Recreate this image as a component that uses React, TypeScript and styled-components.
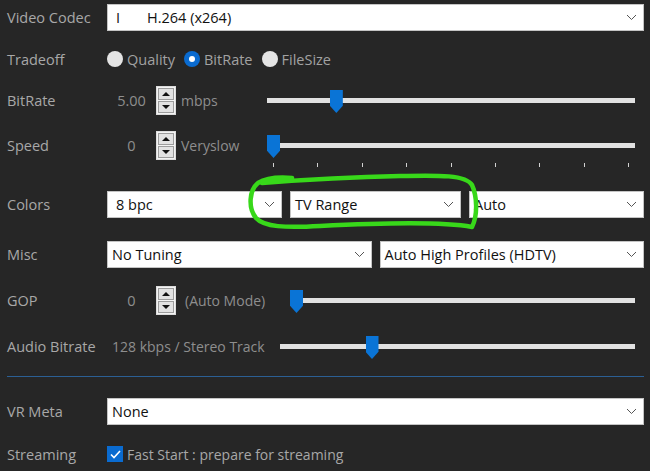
import styled, { createGlobalStyle } from "styled-components";

const GlobalStyle = createGlobalStyle`
  html, body {
    margin: 0;
    padding: 0;
    background: #262626;
  }
  body {
    font-family: "Open Sans", "Noto Sans", sans-serif;
    font-size: 14.5px;
  }
  #root {
    width: 650px;
    height: 471px;
    position: relative;
    overflow: hidden;
  }
`;

const Page = styled.div`
  display: flex;
  flex-direction: column;
  width: 650px;
  box-sizing: border-box;
  padding: 0 6px 0 7px;
`;

const Row = styled.div<{ $mt: number }>`
  display: grid;
  grid-template-columns: 100px 1fr;
  align-items: center;
  height: 30px;
  margin-top: ${(p) => p.$mt}px;
`;

const Label = styled.span`
  color: #a8a8a8;
  white-space: nowrap;
`;

const SelectBox = styled.div`
  height: 27px;
  box-sizing: border-box;
  display: flex;
  align-items: center;
  justify-content: space-between;
  background: #ffffff;
  border: 1px solid #c4c4c4;
  color: #111;
  white-space: nowrap;
  overflow: hidden;
`;

const SelectText = styled.span<{ $pl: number }>`
  padding-left: ${(p) => p.$pl}px;
  display: flex;
  align-items: center;
`;

const CodecTag = styled.span`
  width: 31px;
`;

const Chevron = styled.svg`
  flex: none;
  margin-right: 6px;
`;

const SelectGrid = styled.div<{ $cols: string }>`
  display: grid;
  grid-template-columns: ${(p) => p.$cols};
  gap: 8px;
`;

const RadioGroup = styled.div`
  display: flex;
  align-items: center;
  gap: 9px;
`;

const RadioItem = styled.label`
  display: flex;
  align-items: center;
  gap: 4px;
  color: #a2a2a2;
`;

const RadioDot = styled.span<{ $on?: boolean }>`
  width: 16px;
  height: 16px;
  border-radius: 50%;
  background: ${(p) => (p.$on ? "#0a6bd0" : "#e4e4e4")};
  display: grid;
  place-items: center;
  &::after {
    content: "";
    width: 6px;
    height: 6px;
    border-radius: 50%;
    background: #fff;
    display: ${(p) => (p.$on ? "block" : "none")};
  }
`;

const Controls = styled.div`
  display: flex;
  align-items: center;
  height: 100%;
`;

const NumField = styled.span`
  width: 49px;
  text-align: center;
  color: #8e8e8e;
`;

const Spinner = styled.div`
  width: 20px;
  height: 29px;
  box-sizing: border-box;
  border: 1px solid #dcdcdc;
  background: #f3f3f3;
  padding: 1px;
  display: flex;
  flex-direction: column;
  gap: 1px;
`;

const SpinBtn = styled.div<{ $down?: boolean }>`
  flex: 1;
  background: #e2e2e2;
  border: 1px solid #9c9c9c;
  display: grid;
  place-items: center;
  &::before {
    content: "";
    border-left: 4px solid transparent;
    border-right: 4px solid transparent;
    ${(p) =>
      p.$down ? "border-top: 4px solid #111;" : "border-bottom: 4px solid #111;"}
  }
`;

const Unit = styled.span<{ $ml: number; $w: number }>`
  margin-left: ${(p) => p.$ml}px;
  width: ${(p) => p.$w}px;
  color: #8e8e8e;
  font-size: 14px;
  white-space: nowrap;
`;

const Slider = styled.div`
  flex: 1;
  position: relative;
  height: 30px;
  margin-right: 9px;
  display: flex;
  align-items: center;
`;

const Track = styled.div`
  width: 100%;
  height: 5px;
  background: #e1e1e1;
`;

const Thumb = styled.div`
  position: absolute;
  top: 5px;
  width: 13px;
  height: 23px;
  background: #0a74d6;
  clip-path: polygon(0 0, 100% 0, 100% 68%, 50% 100%, 0 68%);
`;

const Ticks = styled.div`
  position: absolute;
  left: 6px;
  right: 6px;
  top: 33px;
  display: flex;
  justify-content: space-between;
`;

const Tick = styled.span`
  width: 1px;
  height: 4px;
  background: #d2d2d2;
`;

const Separator = styled.div`
  height: 1px;
  margin: 15px 0 0 0;
  background: #2b5f94;
`;

const CheckRow = styled.label`
  display: flex;
  align-items: center;
  gap: 4px;
  color: #a8a8a8;
  font-size: 14px;
`;

const CheckBox = styled.span`
  width: 16px;
  height: 16px;
  background: #0a6bd0;
  display: grid;
  place-items: center;
`;

const Annotation = styled.svg`
  position: absolute;
  left: 0;
  top: 0;
  pointer-events: none;
`;

function Select({ children, pl = 4 }: { children: React.ReactNode; pl?: number }) {
  return (
    <SelectBox>
      <SelectText $pl={pl}>{children}</SelectText>
      <Chevron width="11" height="7" viewBox="0 0 11 7">
        <polyline points="1,1 5.5,5.5 10,1" fill="none" stroke="#555" strokeWidth="1" />
      </Chevron>
    </SelectBox>
  );
}

function Spin() {
  return (
    <Spinner>
      <SpinBtn />
      <SpinBtn $down />
    </Spinner>
  );
}

function RangeSlider({ value, ticks }: { value: number; ticks?: number }) {
  return (
    <Slider>
      <Track />
      <Thumb style={{ left: `calc((100% - 13px) * ${value})` }} />
      {ticks ? (
        <Ticks>
          {Array.from({ length: ticks }).map((_, i) => (
            <Tick key={i} />
          ))}
        </Ticks>
      ) : null}
    </Slider>
  );
}

export default function App() {
  return (
    <>
      <GlobalStyle />
      <Page>
        <Row $mt={2}>
          <Label>Video Codec</Label>
          <Select pl={8}>
            <CodecTag>I</CodecTag>H.264 (x264)
          </Select>
        </Row>
        <Row $mt={12}>
          <Label>Tradeoff</Label>
          <RadioGroup>
            <RadioItem>
              <RadioDot />
              Quality
            </RadioItem>
            <RadioItem>
              <RadioDot $on />
              BitRate
            </RadioItem>
            <RadioItem>
              <RadioDot />
              FileSize
            </RadioItem>
          </RadioGroup>
        </Row>
        <Row $mt={11}>
          <Label>BitRate</Label>
          <Controls>
            <NumField>5.00</NumField>
            <Spin />
            <Unit $ml={5} $w={86}>mbps</Unit>
            <RangeSlider value={0.177} />
          </Controls>
        </Row>
        <Row $mt={15}>
          <Label>Speed</Label>
          <Controls>
            <NumField>0</NumField>
            <Spin />
            <Unit $ml={5} $w={86}>Veryslow</Unit>
            <RangeSlider value={0} ticks={9} />
          </Controls>
        </Row>
        <Row $mt={29}>
          <Label>Colors</Label>
          <SelectGrid $cols="175px 171px 1fr">
            <Select pl={8}>8 bpc</Select>
            <Select>TV Range</Select>
            <Select>Auto</Select>
          </SelectGrid>
        </Row>
        <Row $mt={20}>
          <Label>Misc</Label>
          <SelectGrid $cols="1fr 1fr">
            <Select>No Tuning</Select>
            <Select>Auto High Profiles (HDTV)</Select>
          </SelectGrid>
        </Row>
        <Row $mt={16}>
          <Label>GOP</Label>
          <Controls>
            <NumField>0</NumField>
            <Spin />
            <Unit $ml={9} $w={105}>(Auto Mode)</Unit>
            <RangeSlider value={0} />
          </Controls>
        </Row>
        <Row $mt={16}>
          <Label>Audio Bitrate</Label>
          <Controls>
            <Unit $ml={5} $w={168}>128 kbps / Stereo Track</Unit>
            <RangeSlider value={0.25} />
          </Controls>
        </Row>
        <Separator />
        <Row $mt={19}>
          <Label>VR Meta</Label>
          <Select>None</Select>
        </Row>
        <Row $mt={13}>
          <Label>Streaming</Label>
          <CheckRow>
            <CheckBox>
              <svg width="11" height="9" viewBox="0 0 11 9">
                <polyline points="1,4.5 4,7.5 10,1" fill="none" stroke="#fff" strokeWidth="1.6" />
              </svg>
            </CheckBox>
            Fast Start : prepare for streaming
          </CheckRow>
        </Row>
      </Page>
      <Annotation width="650" height="471" viewBox="0 0 650 471">
        <path
          d="M 292 178 C 280 177, 266 178, 258 183 C 249 190, 248 208, 256 218 C 264 227, 285 228, 320 226 C 380 223, 440 221, 472 227 C 478 215, 477 196, 472 185 C 466 175, 440 175, 400 176 C 350 177, 300 180, 262 183"
          fill="none"
          stroke="#38d81a"
          strokeWidth="4.5"
          strokeLinecap="round"
          strokeLinejoin="round"
        />
      </Annotation>
    </>
  );
}
